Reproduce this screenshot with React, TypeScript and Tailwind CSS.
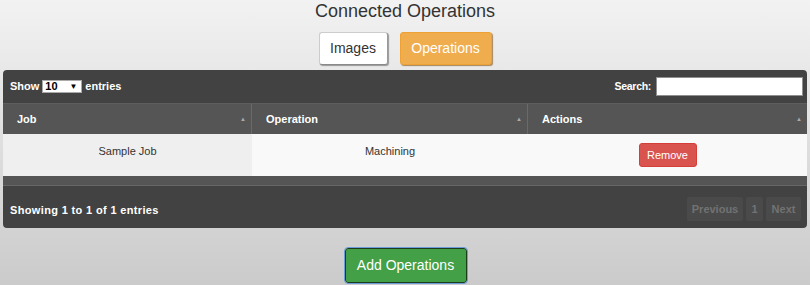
export default function App() {
  return (
    <div className="w-[810px] h-[285px] overflow-hidden bg-gradient-to-b from-[#f2f2f2] to-[#cbcbcb] font-['Liberation_Sans',Arial,sans-serif] flex flex-col items-center">
      <h1 className="text-[18px] leading-[20px] text-[#333] mt-[1px]">Connected Operations</h1>
      <div className="flex gap-[12px] mt-[11px]">
        <button className="w-[69px] h-[33px] bg-white text-[#333] text-[14px] rounded-[3px] border border-[#ccc] border-b-[#8a8a8a] border-r-[#999] shadow-[1px_1px_1px_rgba(0,0,0,0.35)]">
          Images
        </button>
        <button className="w-[92px] h-[33px] bg-[#f0ad4e] text-white text-[14px] rounded-[3px] border border-[#eea236] shadow-[1px_1px_1px_rgba(120,70,0,0.6)]">
          Operations
        </button>
      </div>

      <div className="w-[804px] mt-[5px] bg-[#424242] rounded-[4px] overflow-hidden flex flex-col">
        <div className="h-[33px] flex items-center justify-between pl-[7px] pr-[4px] text-[11px] font-bold text-white">
          <div className="flex items-center gap-[3px]">
            <span>Show</span>
            <div className="w-[40px] h-[13px] bg-white border border-[#aaa] text-black flex items-center justify-between px-[2px]">
              <span>10</span>
              <span className="text-[8px] mr-[2px]">▼</span>
            </div>
            <span>entries</span>
          </div>
          <div className="flex items-center gap-[5px]">
            <span className="text-[10.5px] tracking-[-0.3px]">Search:</span>
            <div className="w-[147px] h-[19px] bg-white border border-[#8f8f8f]" />
          </div>
        </div>

        <div className="grid grid-cols-[249px_276px_279px] border-t border-[#5e5e5e]">
          {["Job", "Operation", "Actions"].map((h, i) => (
            <div
              key={h}
              className={`h-[30px] bg-[#555] flex items-center justify-between pl-[14px] pr-[5px] text-[11px] font-bold text-white ${i < 2 ? "border-r border-[#6a6a6a]" : ""}`}
            >
              <span>{h}</span>
              <span className="text-[6px] text-[#aaa]">▲</span>
            </div>
          ))}
          <div className="h-[42px] bg-[#efefef] flex items-center justify-center text-[11px] text-[#333] pb-[8px]">Sample Job</div>
          <div className="h-[42px] bg-[#f9f9f9] flex items-center justify-center text-[11px] text-[#333] pb-[8px]">Machining</div>
          <div className="h-[42px] bg-[#f9f9f9] flex items-center justify-center">
            <button className="w-[58px] h-[24px] bg-[#d9534f] border border-[#d43f3a] rounded-[3px] text-white text-[11px]">Remove</button>
          </div>
        </div>

        <div className="h-[10px] bg-[#555] border-b border-[#666]" />

        <div className="h-[42px] flex items-center justify-between pl-[7px] pr-[6px] pt-[4px] font-bold">
          <span className="text-white text-[11px] tracking-[0.35px] mt-[2px]">Showing 1 to 1 of 1 entries</span>
          <div className="flex gap-[3px] text-[#727272] text-[11px]">
            <span className="h-[24px] w-[56px] bg-[#4a4a4a] rounded-[2px] flex items-center justify-center">Previous</span>
            <span className="h-[24px] w-[17px] bg-[#4a4a4a] rounded-[2px] flex items-center justify-center">1</span>
            <span className="h-[24px] w-[35px] bg-[#4a4a4a] rounded-[2px] flex items-center justify-center">Next</span>
          </div>
        </div>
      </div>

      <button className="mt-[20px] w-[122px] h-[35px] bg-[#43a047] text-white text-[14px] rounded-[3px] border border-[#1c3d1c] outline outline-[1px] outline-[#6b9bd8] ml-[1px]">
        Add Operations
      </button>
    </div>
  );
}
